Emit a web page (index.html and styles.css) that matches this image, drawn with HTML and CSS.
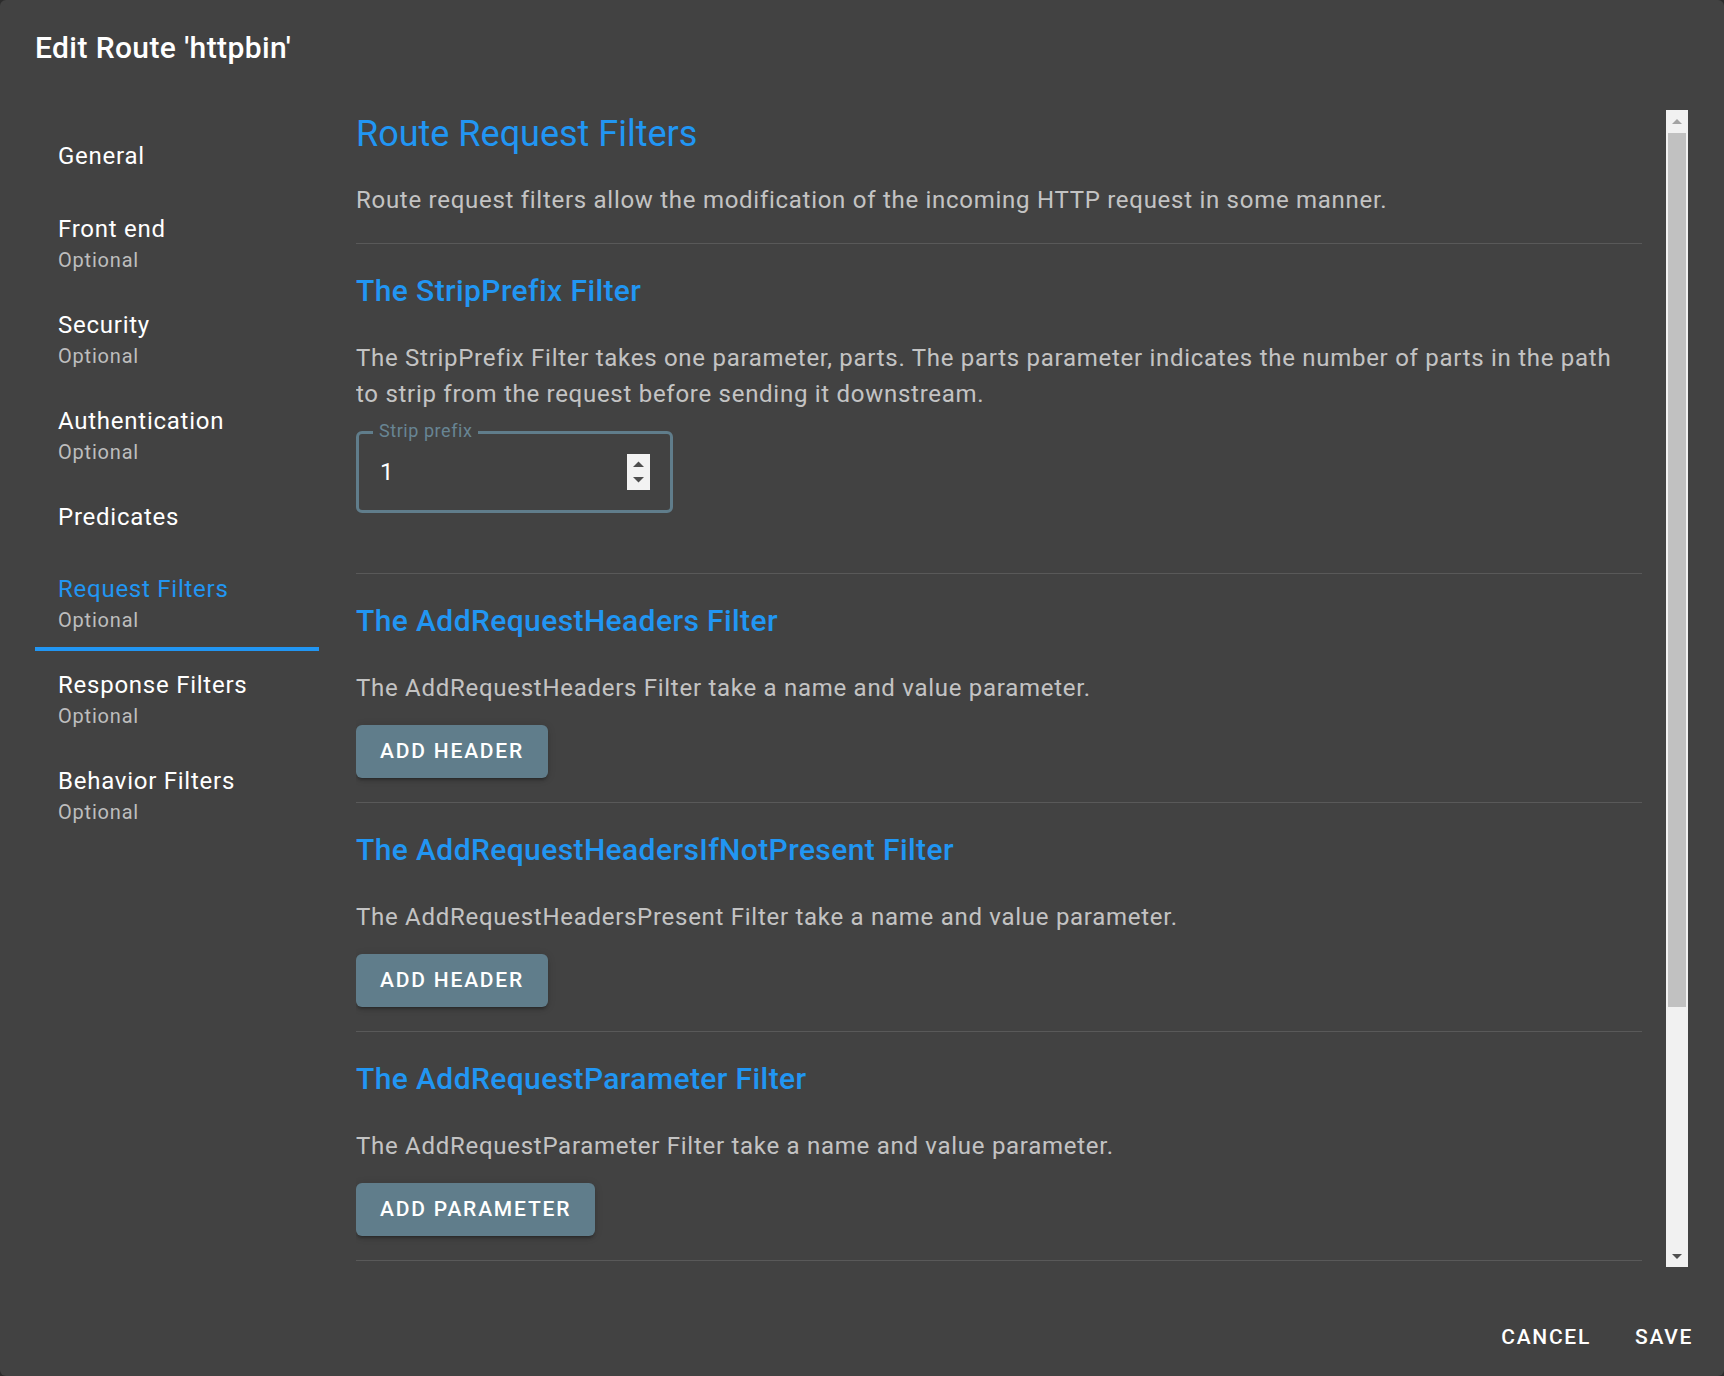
FILE: index.html
```html
<!DOCTYPE html>
<html>
	<head>
		<meta charset="utf-8">
		<title>Edit Route</title>
		<link rel="stylesheet" href="styles.css">
	</head>
	<body>
		<div class="dialog">
			<h2 class="dialog_title">Edit Route 'httpbin'</h2>
			<div class="dialog_body">
				<ul class="steps">
					<li class="step step_first"><div class="step_label">General</div></li>
					<li class="step"><div class="step_label">Front end</div><div class="step_opt">Optional</div></li>
					<li class="step"><div class="step_label">Security</div><div class="step_opt">Optional</div></li>
					<li class="step"><div class="step_label">Authentication</div><div class="step_opt">Optional</div></li>
					<li class="step step_short"><div class="step_label">Predicates</div></li>
					<li class="step step_on"><div class="step_label">Request Filters</div><div class="step_opt">Optional</div></li>
					<li class="step"><div class="step_label">Response Filters</div><div class="step_opt">Optional</div></li>
					<li class="step"><div class="step_label">Behavior Filters</div><div class="step_opt">Optional</div></li>
				</ul>
				<div class="panel">
					<div class="panel_scroll">
						<div class="intro">
							<h3 class="page_title">Route Request Filters</h3>
							<p class="desc">Route request filters allow the modification of the incoming HTTP request in some manner.</p>
						</div>
						<div class="filter">
							<h4 class="filter_title">The StripPrefix Filter</h4>
							<p class="desc">The StripPrefix Filter takes one parameter, parts. The parts parameter indicates the number of parts in the path to strip from the request before sending it downstream.</p>
							<div class="field">
								<span class="field_label">Strip prefix</span>
								<span class="field_value">1</span>
								<svg class="spin" width="23" height="36" viewBox="0 0 23 36">
									<rect width="23" height="36" fill="#f2f2f2"/>
									<path d="M6 13 L11.5 7.5 L17 13 Z" fill="#4e4e4e"/>
									<path d="M6 23 L11.5 28.5 L17 23 Z" fill="#4e4e4e"/>
								</svg>
							</div>
						</div>
						<div class="filter">
							<h4 class="filter_title">The AddRequestHeaders Filter</h4>
							<p class="desc">The AddRequestHeaders Filter take a name and value parameter.</p>
							<button class="btn">Add Header</button>
						</div>
						<div class="filter">
							<h4 class="filter_title">The AddRequestHeadersIfNotPresent Filter</h4>
							<p class="desc">The AddRequestHeadersPresent Filter take a name and value parameter.</p>
							<button class="btn">Add Header</button>
						</div>
						<div class="filter">
							<h4 class="filter_title">The AddRequestParameter Filter</h4>
							<p class="desc">The AddRequestParameter Filter take a name and value parameter.</p>
							<button class="btn">Add Parameter</button>
						</div>
					</div>
					<!-- 假的滚动条 -->
					<div class="scrollbar">
						<div class="sb_btn"><span class="sb_up"></span></div>
						<div class="sb_thumb"></div>
						<div class="sb_track"></div>
						<div class="sb_btn"><span class="sb_down"></span></div>
					</div>
				</div>
			</div>
			<div class="dialog_actions">
				<button class="text_btn">Cancel</button>
				<button class="text_btn">Save</button>
			</div>
		</div>
	</body>
</html>
```

FILE: styles.css
```css
html, body{
	margin: 0;
	height: 100%;
	background-color: #2c2c2c;
}
body{
	font-family: Roboto, "Noto Sans", sans-serif;
}
.dialog{
	height: 1376px;
	box-sizing: border-box;
	background-color: #424242;
	border-radius: 6px;
	display: flex;
	flex-direction: column;
	color: #fff;
	overflow: hidden;
}
.dialog_title{
	margin: 0;
	padding: 24px 36px 24px 35px;
	font-size: 30px;
	font-weight: 500;
	line-height: 48px;
	letter-spacing: 0.4px;
}
.dialog_body{
	flex: 1;
	min-height: 0;
	margin-top: 14px;
	display: flex;
	gap: 37px;
	padding: 0 36px 0 35px;
}
.steps{
	list-style: none;
	margin: 0;
	padding: 8px 0 0;
	width: 284px;
	flex: none;
}
.step{
	position: relative;
	padding: 17px 23px;
}
.step_first{
	padding-top: 18px;
	padding-bottom: 16px;
}
.step_short{
	padding-bottom: 15px;
}
.step_label{
	font-size: 24px;
	line-height: 40px;
	letter-spacing: 0.75px;
}
.step_opt{
	font-size: 20px;
	line-height: 22px;
	letter-spacing: 0.8px;
	color: rgba(255,255,255,0.66);
}
.step_on .step_label{
	color: #2196f3;
}
.step_on::after{
	content: "";
	position: absolute;
	left: 0;
	right: 0;
	bottom: -3px;
	height: 4px;
	background-color: #2196f3;
}
.panel{
	flex: 1;
	min-width: 0;
	display: flex;
	gap: 24px;
}
.panel_scroll{
	flex: 1;
	min-width: 0;
	overflow: hidden;
}
.intro{
	padding-bottom: 25px;
	border-bottom: 1px solid rgba(255,255,255,0.12);
}
.page_title{
	margin: 0 0 24px;
	font-size: 36px;
	font-weight: 400;
	line-height: 48px;
	color: #2196f3;
}
.desc{
	max-width: 1275px;
	margin: 0;
	font-size: 24px;
	line-height: 36px;
	letter-spacing: 0.72px;
	color: rgba(255,255,255,0.7);
}
.filter{
	padding: 23px 0 24px;
	border-bottom: 1px solid rgba(255,255,255,0.12);
}
.filter_title{
	margin: 0 0 25px;
	font-size: 30px;
	font-weight: 500;
	line-height: 48px;
	letter-spacing: 0.4px;
	color: #2196f3;
}
.filter .desc{
	margin-bottom: 19px;
}
.field{
	position: relative;
	width: 317px;
	height: 82px;
	box-sizing: border-box;
	margin-bottom: 36px;
	padding: 0 20px 0 21px;
	border: 3px solid #607d8b;
	border-radius: 6px;
	display: flex;
	align-items: center;
	justify-content: space-between;
}
.field_label{
	position: absolute;
	top: -13px;
	left: 14px;
	padding: 0 6px;
	background-color: #424242;
	font-size: 18px;
	line-height: 20px;
	letter-spacing: 0.55px;
	color: #688594;
}
.field_value{
	font-size: 24px;
	color: #fff;
}
.spin{
	display: block;
}
.btn{
	display: block;
	border: 0;
	border-radius: 6px;
	padding: 9px 24px;
	background-color: #607d8b;
	color: #fff;
	font-family: Roboto, "Noto Sans", sans-serif;
	font-size: 21px;
	font-weight: 500;
	line-height: 35px;
	letter-spacing: 1.8px;
	text-transform: uppercase;
	box-shadow: 0 4px 2px -3px rgba(0,0,0,0.2), 0 3px 3px 0 rgba(0,0,0,0.14), 0 1px 8px 0 rgba(0,0,0,0.12);
}
.scrollbar{
	width: 22px;
	flex: none;
	background-color: #f1f1f1;
	display: flex;
	flex-direction: column;
}
.sb_btn{
	height: 22px;
	flex: none;
	display: flex;
	align-items: center;
	justify-content: center;
}
.sb_up{
	width: 0;
	height: 0;
	border-left: 5px solid transparent;
	border-right: 5px solid transparent;
	border-bottom: 5px solid #a3a3a3;
}
.sb_down{
	width: 0;
	height: 0;
	border-left: 5px solid transparent;
	border-right: 5px solid transparent;
	border-top: 5px solid #505050;
}
.sb_thumb{
	height: 874px;
	flex: none;
	margin: 1px 2px 0;
	background-color: #c1c1c1;
}
.sb_track{
	flex: 1;
}
.dialog_actions{
	height: 109px;
	box-sizing: border-box;
	flex: none;
	display: flex;
	justify-content: flex-end;
	align-items: flex-start;
	gap: 20px;
	padding: 43px 19px 0 0;
}
.text_btn{
	border: 0;
	background: none;
	padding: 9px 12px;
	color: #fff;
	font-family: Roboto, "Noto Sans", sans-serif;
	font-size: 21px;
	font-weight: 500;
	line-height: 36px;
	letter-spacing: 1.7px;
	text-transform: uppercase;
}
```
